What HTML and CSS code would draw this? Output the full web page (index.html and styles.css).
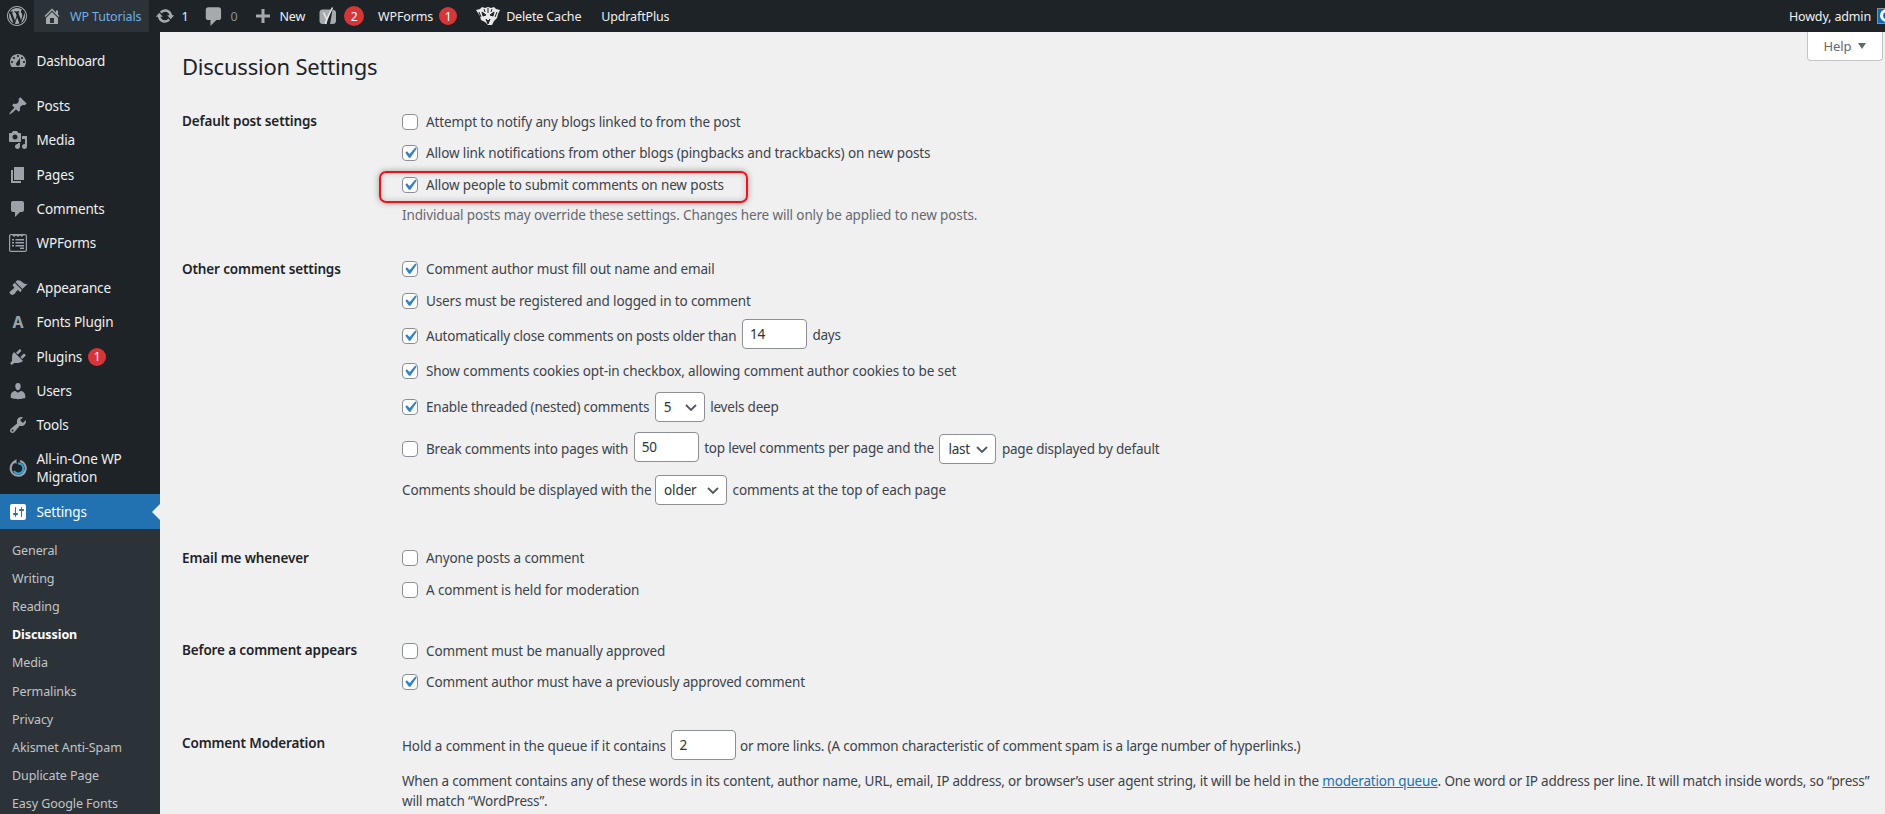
FILE: index.html
```html
<!DOCTYPE html>
<html lang="en">
<head>
<meta charset="utf-8">
<title>Discussion Settings</title>
<link rel="stylesheet" href="styles.css">
</head>
<body>
<header class="bar">
  <div class="bar-left">
    <span class="bar-item logo"><svg class="ic20" viewBox="0 0 20 20"><path d="M20 10c0-5.52-4.48-10-10-10S0 4.48 0 10s4.48 10 10 10 10-4.48 10-10zM10 1.01c4.96 0 8.99 4.03 8.99 8.99s-4.03 8.99-8.99 8.99S1.01 14.96 1.01 10 5.04 1.01 10 1.01zM8.01 14.82L4.96 6.61c.49-.03 1.05-.08 1.05-.08.43-.05.38-1.01-.06-.99 0 0-1.29.1-2.13.1-.15 0-.33 0-.52-.01 1.44-2.17 3.9-3.6 6.7-3.6 2.09 0 3.99.79 5.41 2.09-.6-.08-1.45.35-1.45 1.42 0 .66.38 1.22.79 1.88.31.54.5 1.22.5 2.21 0 1.34-1.27 4.48-1.27 4.48l-2.71-7.5c.48-.03.75-.16.75-.16.43-.04.38-1.1-.05-1.08 0 0-1.3.11-2.14.11-.78 0-2.11-.11-2.11-.11-.43-.02-.48 1.06-.05 1.08l.84.08 1.12 3.04zm6.02 2.15L16.64 10s.67-1.69.39-3.81c.63 1.14.94 2.42.94 3.81 0 2.96-1.56 5.58-3.94 6.97zM2.68 6.77L6.5 17.25c-2.67-1.3-4.47-4.07-4.47-7.25 0-1.16.2-2.23.65-3.23zm7.45 4.53l2.29 6.25c-.76.27-1.58.42-2.42.42-.71 0-1.4-.11-2.05-.3z"/></svg></span>
    <span class="bar-item site"><svg class="ic20" viewBox="0 0 20 20"><path d="M16 8.5l1.53 1.53-1.06 1.06L10 4.62l-6.47 6.47-1.06-1.06L10 2.5l4 4v-2h2v4zm-6-2.46l6 5.99V18H4v-5.97zM12 17v-5H8v5h4z"/></svg><span class="site-name">WP Tutorials</span></span>
    <span class="bar-item updates"><svg class="ic20" viewBox="0 0 20 20"><path d="M10.2 3.28c3.53 0 6.43 2.61 6.92 6h2.08l-3.5 4-3.5-4h2.32c-.45-1.97-2.21-3.45-4.32-3.45-1.45 0-2.73.71-3.54 1.78L4.95 5.66C6.23 4.2 8.11 3.28 10.2 3.28zm-.4 13.44c-3.52 0-6.43-2.61-6.92-6H.8l3.5-4c1.17 1.33 2.33 2.67 3.5 4H5.48c.45 1.97 2.21 3.45 4.32 3.45 1.45 0 2.73-.71 3.54-1.78l1.71 1.95c-1.28 1.46-3.15 2.38-5.25 2.38z"/></svg><span>1</span></span>
    <span class="bar-item"><svg class="ic20" viewBox="1.500 1 17 17"><path d="M5 2h9c1.100 0 2 .9 2 2v7c0 1.100-.9 2-2 2h-2l-5 5v-5H5c-1.100 0-2-.9-2-2V4c0-1.100.9-2 2-2z"/></svg><span class="muted">0</span></span>
    <span class="bar-item new"><svg class="ic20" viewBox="0 0 20 20"><path d="M8.500 3h3v5.500H17v3h-5.500V17h-3v-5.500H3v-3h5.500z"/></svg><span>New</span></span>
    <span class="bar-item yoast"><svg class="ic20" viewBox="0 0 20 20"><path d="M4.500 3.500H13L8.500 18H4.500C3 18 1.500 17 1.500 15V6.500C1.500 4.800 2.800 3.500 4.500 3.500zM14.500 3.600c1.800.3 3.500 1.300 3.500 3V15c0 1.800-1.400 3-3.200 3h-2.700z"/><path d="M5.500 6.500l3.200 6.800L7.500 18M14.500 1.500l-5.800 11.800" fill="none" stroke="#e8e8e8" stroke-width="1.500"/></svg><span class="badge">2</span></span>
    <span class="bar-item">WPForms<span class="badge small">1</span></span>
    <span class="bar-item wide"><svg class="tiger" viewBox="0 0 26 20"><path d="M1 4l4-1 2-2 3 1 3-1 3 1 3-1 2 2 4 1-2 4-1 4-3 3-2 4h-4l-3-3-4-2-1-4z" fill="#e8e8e8"/><path d="M7 6l4 3-3 1zM19 6l-4 3 3 1zM11 13l2 2 2-2-2 5zM4 6l2 5M22 6l-2 5M13 2v5M9 3l1 3M17 3l-1 3" fill="#1d2327" stroke="#1d2327"/></svg><span>Delete Cache</span></span>
    <span class="bar-item wide">UpdraftPlus</span>
  </div>
  <div class="bar-right"><span>Howdy, admin</span><span class="avatar"><span class="avatar-mark"></span></span></div>
</header>

<div class="layout">
  <nav class="side">
    <ul class="menu first">
      <li class="mi"><svg class="mic" viewBox="0 0 20 20"><path fill-rule="evenodd" d="M3.760 16h12.480c1.100-1.370 1.760-3.110 1.760-5 0-4.420-3.580-8-8-8s-8 3.580-8 8c0 1.890.660 3.630 1.760 5zM10 4c.55 0 1 .45 1 1s-.45 1-1 1-1-.45-1-1 .45-1 1-1zM6 6c.55 0 1 .45 1 1s-.45 1-1 1-1-.45-1-1 .45-1 1-1zm8 0c.55 0 1 .45 1 1s-.45 1-1 1-1-.45-1-1 .45-1 1-1zm-5.370 5.550L12 7v6c0 1.100-.9 2-2 2s-2-.9-2-2c0-.57.24-1.080.63-1.450zM4 10c.55 0 1 .45 1 1s-.45 1-1 1-1-.45-1-1 .45-1 1-1zm12 0c.55 0 1 .45 1 1s-.45 1-1 1-1-.45-1-1 .45-1 1-1z"/></svg>Dashboard</li>
    </ul>
    <ul class="menu">
      <li class="mi"><svg class="mic" viewBox="0 0 20 20"><path d="M10.440 3.020l1.820-1.820 6.360 6.350-1.830 1.820c-1.050-.68-2.480-.57-3.410.36l-.75.75c-.92.93-1.040 2.350-.35 3.410l-1.830 1.820-2.410-2.410-2.800 2.790c-.42.42-3.380 2.710-3.800 2.290s1.860-3.390 2.280-3.810l2.790-2.790L4.100 9.360l1.830-1.820c1.050.69 2.480.57 3.400-.36l.75-.75c.93-.92 1.050-2.350.36-3.410z"/></svg>Posts</li>
      <li class="mi"><svg class="mic" viewBox="0 0 20 20"><path fill-rule="evenodd" d="M13 11V4c0-.55-.45-1-1-1h-1.670L9 1H5L3.670 3H2c-.55 0-1 .45-1 1v7c0 .55.45 1 1 1h10c.55 0 1-.45 1-1zM7 4.500c1.380 0 2.500 1.120 2.500 2.500S8.380 9.500 7 9.500 4.500 8.380 4.500 7 5.620 4.500 7 4.500zM14 6h5v10.500c0 1.380-1.120 2.500-2.500 2.500S14 17.880 14 16.500s1.120-2.500 2.500-2.500c.17 0 .34.02.5.05V9h-3V6zm-4 8.050V13h2v3.500c0 1.380-1.120 2.500-2.500 2.500S7 17.880 7 16.500 8.120 14 9.500 14c.17 0 .34.02.5.05z"/></svg>Media</li>
      <li class="mi"><svg class="mic" viewBox="0 0 20 20"><path d="M6 15V2h10v13H6zm-1 1h8v2H3V5h2v11z"/></svg>Pages</li>
      <li class="mi"><svg class="mic" viewBox="0 0 20 20"><path d="M5 2h9c1.100 0 2 .9 2 2v7c0 1.100-.9 2-2 2h-2l-5 5v-5H5c-1.100 0-2-.9-2-2V4c0-1.100.9-2 2-2z"/></svg>Comments</li>
      <li class="mi"><svg class="mic" viewBox="0 0 20 20"><path fill-rule="evenodd" d="M3 1h14c1.100 0 2 .9 2 2v14c0 1.100-.9 2-2 2H3c-1.100 0-2-.9-2-2V3c0-1.100.9-2 2-2zm0 1.200c-.5 0-.8.3-.8.8v14c0 .5.3.8.8.8h14c.5 0 .8-.3.8-.8V3c0-.5-.3-.8-.8-.8h-1.500L14 4l-2-1.500-2 1.500-2-1.500L6 4 4.500 2.200zM4 6h2v1.500H4zm3.500 0H16v1.500H7.500zM4 9h2v1.500H4zm3.500 0H16v1.500H7.500zM4 12h2v1.500H4zm3.500 0H16v1.500H7.500zM12 14.500h4V16h-4z"/></svg>WPForms</li>
    </ul>
    <ul class="menu">
      <li class="mi"><svg class="mic" viewBox="0 0 20 20"><path d="M14.480 11.060L7.410 3.990l1.500-1.500c.5-.56 2.300-.47 3.510.32 1.210.8 1.430 1.280 2.910 2.100 1.180.64 2.450 1.260 4.450.85zm-.71.71L6.700 4.700 4.930 6.470c-.39.39-.39 1.020 0 1.410l1.060 1.060c.39.39.39 1.030 0 1.420-.6.6-1.430 1.110-2.210 1.690-.35.26-.7.53-1.010.84C1.430 13.230.99 14.500 2.500 15.990c1.510 1.500 2.770 1.080 4.110-.22.33-.33.6-.68.86-1.020.58-.78 1.090-1.610 1.690-2.210.39-.39 1.020-.39 1.410 0l1.060 1.060c.39.39 1.020.39 1.410 0z"/></svg>Appearance</li>
      <li class="mi"><span class="mic glyph">A</span>Fonts Plugin</li>
      <li class="mi"><svg class="mic" viewBox="0 0 20 20"><path d="M13.110 4.360L9.870 7.600 8 5.730l3.240-3.240c.35-.34 1.050-.2 1.560.32.52.51.66 1.210.31 1.550zm-8 1.770l.91-1.120 9.010 9.010-1.190.84c-.71.71-2.630 1.160-3.820 1.160H6.140L4.900 17.260c-.59.59-1.540.59-2.120 0-.59-.58-.59-1.530 0-2.120l1.240-1.240v-3.880c0-1.130.4-3.190 1.090-3.890zm7.260 3.970l3.240-3.240c.34-.35 1.040-.21 1.550.31.52.51.66 1.210.31 1.550l-3.240 3.250z"/></svg>Plugins<span class="badge side-badge">1</span></li>
      <li class="mi"><svg class="mic" viewBox="0 0 20 20"><path d="M10 9.250c-2.270 0-2.730-3.440-2.730-3.440C7 4.020 7.820 2 9.970 2c2.160 0 2.980 2.020 2.710 3.810 0 0-.41 3.440-2.680 3.440zm0 2.570L12.720 10c2.390 0 4.520 2.330 4.520 4.530v2.490s-3.650 1.130-7.240 1.130c-3.650 0-7.240-1.130-7.240-1.130v-2.490c0-2.250 1.940-4.480 4.470-4.480z"/></svg>Users</li>
      <li class="mi"><svg class="mic" viewBox="0 0 20 20"><path fill-rule="evenodd" d="M16.680 9.770c-1.340 1.340-3.300 1.670-4.950.99l-5.410 6.520c-.99.99-2.590.99-3.580 0s-.99-2.590 0-3.570l6.520-5.420c-.68-1.650-.35-3.610.99-4.950 1.280-1.280 3.120-1.620 4.720-1.060l-2.890 2.890 2.820 2.820 2.860-2.870c.53 1.580.18 3.390-1.080 4.650zM3.810 16.210c.4.39 1.040.39 1.430 0 .4-.4.4-1.040 0-1.430-.39-.4-1.030-.4-1.430 0-.39.39-.39 1.030 0 1.430z"/></svg>Tools</li>
      <li class="mi tall"><svg class="mic" viewBox="0 0 20 20"><path d="M7 3.500A7.500 7.500 0 1 0 12 3" fill="none" stroke="#9ca2a7" stroke-width="2"/><path d="M8.500 1v5L5 3.500z" fill="#9ca2a7"/><path d="M10 5.500A5 5 0 1 1 6 13" fill="none" stroke="#2ea2dd" stroke-width="2"/></svg><span>All-in-One WP Migration</span></li>
      <li class="mi current"><svg class="mic" viewBox="0 0 20 20"><path fill-rule="evenodd" d="M18 16V4c0-1.100-.9-2-2-2H4c-1.100 0-2 .9-2 2v12c0 1.100.9 2 2 2h12c1.100 0 2-.9 2-2zM8 11h1c.55 0 1 .45 1 1s-.45 1-1 1H8v1.500c0 .28-.22.5-.5.5s-.5-.22-.5-.5V13H6c-.55 0-1-.45-1-1s.45-1 1-1h1V5.500c0-.28.22-.5.5-.5s.5.22.5.5V11zm5-2h-1c-.55 0-1-.45-1-1s.45-1 1-1h1V5.500c0-.28.22-.5.5-.5s.5.22.5.5V7h1c.55 0 1 .45 1 1s-.45 1-1 1h-1v5.500c0 .28-.22.5-.5.5s-.5-.22-.5-.5V9z"/></svg>Settings</li>
    </ul>
    <ul class="sub">
      <li>General</li><li>Writing</li><li>Reading</li><li class="on">Discussion</li><li>Media</li><li>Permalinks</li><li>Privacy</li><li>Akismet Anti-Spam</li><li>Duplicate Page</li><li>Easy Google Fonts</li>
    </ul>
  </nav>

  <main class="main">
    <div class="help">Help <span class="tri"></span></div>
    <h1 class="title">Discussion Settings</h1>

    <section class="group g-default">
      <h2 class="th">Default post settings</h2>
      <div class="td">
        <label class="row"><input type="checkbox">Attempt to notify any blogs linked to from the post</label>
        <label class="row"><input type="checkbox" checked>Allow link notifications from other blogs (pingbacks and trackbacks) on new posts</label>
        <label class="row marked"><input type="checkbox" checked>Allow people to submit comments on new posts<span class="mark"></span></label>
        <p class="row desc">Individual posts may override these settings. Changes here will only be applied to new posts.</p>
      </div>
    </section>

    <section class="group g-other">
      <h2 class="th">Other comment settings</h2>
      <div class="td">
        <label class="row"><input type="checkbox" checked>Comment author must fill out name and email</label>
        <label class="row"><input type="checkbox" checked>Users must be registered and logged in to comment</label>
        <label class="row r-close tight"><input type="checkbox" checked><span>Automatically close comments on posts older than</span><input class="num lifted" type="text" value="14"><span class="lift">days</span></label>
        <label class="row r-cookie"><input type="checkbox" checked>Show comments cookies opt-in checkbox, allowing comment author cookies to be set</label>
        <label class="row r-thread tight"><input type="checkbox" checked><span>Enable threaded (nested) comments</span><select class="sel s5"><option>5</option></select><span class="lift-s">levels deep</span></label>
        <label class="row r-break tight"><input type="checkbox"><span>Break comments into pages with</span><input class="num lifted" type="text" value="50"><span class="lift">top level comments per page and the</span><select class="sel s-last"><option>last</option></select><span class="lift-s">page displayed by default</span></label>
        <label class="row r-order"><span>Comments should be displayed with the</span><select class="sel s-older"><option>older</option></select><span>comments at the top of each page</span></label>
      </div>
    </section>

    <section class="group g-email">
      <h2 class="th">Email me whenever</h2>
      <div class="td">
        <label class="row"><input type="checkbox">Anyone posts a comment</label>
        <label class="row"><input type="checkbox">A comment is held for moderation</label>
      </div>
    </section>

    <section class="group g-before">
      <h2 class="th">Before a comment appears</h2>
      <div class="td">
        <label class="row"><input type="checkbox">Comment must be manually approved</label>
        <label class="row"><input type="checkbox" checked>Comment author must have a previously approved comment</label>
      </div>
    </section>

    <section class="group g-mod">
      <h2 class="th">Comment Moderation</h2>
      <div class="td">
        <label class="row r-hold"><span>Hold a comment in the queue if it contains</span><input class="num lifted-s" type="text" value="2"><span class="tight">or more links. (A common characteristic of comment spam is a large number of hyperlinks.)</span></label>
        <p class="para">When a comment contains any of these words in its content, author name, URL, email, IP address, or browser’s user agent string, it will be held in the <a href="#">moderation queue</a>. One word or IP address per line. It will match inside words, so “press” will match “WordPress”.</p>
      </div>
    </section>
  </main>
</div>
</body>
</html>
```

FILE: styles.css
```css
* { box-sizing: border-box; }
html, body { height: 100%; margin: 0; overflow: hidden; }
body { background: #f0f0f1; color: #3c434a; font-family: "Noto Sans", "Open Sans", sans-serif; font-size: 13px; }
ul { list-style: none; margin: 0; padding: 0; }

.bar { height: 32px; background: #1d2327; color: #f0f0f1; display: flex; justify-content: space-between; font-size: 12.5px; letter-spacing: -.15px; }
.bar-left { display: flex; }
.bar-right { display: flex; align-items: center; gap: 6px; white-space: nowrap; margin-right: -14px; }
.bar-item { display: flex; align-items: center; gap: 6px; padding: 0 8px; height: 32px; white-space: nowrap; }
.bar-item svg { fill: #a7aaad; flex: none; }
.ic20 { width: 20px; height: 20px; }
.logo { padding: 0 7px; }
.site { background: #2c3338; color: #72aee6; gap: 8px; }
.updates { padding-left: 6px; }
.muted { color: #8c8f94; }
.new { padding-right: 6px; }
.yoast { padding-left: 7px; padding-right: 6px; }
.wide { padding: 0 10px; gap: 5px; }
.tiger { width: 26px; height: 20px; }
.badge { display: inline-flex; align-items: center; justify-content: center; width: 20px; height: 20px; border-radius: 50%; background: #d63638; color: #fff; font-size: 12px; }
.small { width: 18px; height: 18px; }
.avatar { width: 22px; height: 16px; background: #0f6cb0; border: 1px solid #8c8f94; display: block; overflow: hidden; }
.avatar-mark { display: block; width: 13px; height: 13px; border: 3px solid #fff; border-radius: 50%; margin: 0 0 0 2px; }

.layout { display: flex; height: calc(100% - 32px); }
.side { width: 160px; flex: none; background: #1d2327; color: #f0f0f1; font-size: 13.5px; letter-spacing: -.13px; overflow: hidden; }
.menu { margin-bottom: 11px; }
.menu.first { margin-top: 12px; }
.mi { display: flex; align-items: center; gap: 8.5px; height: 34.2px; padding-left: 8px; position: relative; }
.mic { width: 20px; height: 20px; flex: none; fill: #9ca2a7; }
.glyph { display: flex; align-items: center; justify-content: center; font-weight: 700; font-size: 16px; color: #9ca2a7; }
.side-badge { margin-left: -2.500px; font-size: 12px; width: 18px; height: 18px; }
.tall { height: 52px; line-height: 18px; }
.current { background: #2271b1; color: #fff; height: 35px; margin-bottom: -11px; }
.current .mic { fill: #fff; }
.current::after { content: ""; position: absolute; right: 0; top: 9.500px; border: 8px solid transparent; border-right-color: #f0f0f1; border-left-width: 0; }
.sub { background: #2c3338; padding: 7.600px 0; color: #c3c4c7; font-size: 12.5px; letter-spacing: -.08px; }
.sub li { height: 28.2px; line-height: 28.2px; padding-left: 12px; }
.sub .on { color: #fff; font-weight: 700; }

.main { flex: 1; min-width: 0; padding: 0 14px 0 22px; position: relative; font-size: 13.5px; letter-spacing: -.13px; }
.help { position: absolute; right: 2px; top: 0; width: 76px; height: 29px; background: #fff; border: 1px solid #c3c4c7; border-top: 0; border-radius: 0 0 4px 4px; color: #646970; display: flex; align-items: center; justify-content: center; gap: 7px; font-size: 13px; }
.tri { border: 4.500px solid transparent; border-top: 6px solid #646970; border-bottom: 0; }
.title { margin: 0; padding-top: 19px; font-size: 22px; font-weight: 400; line-height: 30px; letter-spacing: -.22px; color: #1d2327; }

.group { display: flex; }
.th { width: 220px; flex: none; margin: 0; font-size: inherit; font-weight: 600; color: #1d2327; line-height: 31.500px; }
.td { flex: 1; min-width: 0; }
.row { display: flex; align-items: center; height: 31.500px; margin: 0; white-space: pre; position: relative; }
.tight { letter-spacing: -.2px; }
.row > input[type=checkbox] { appearance: none; width: 16px; height: 16px; margin: 0 8px 0 0; flex: none; border: 1px solid #8c8f94; border-radius: 4px; background: #fff center/22px no-repeat; }
.row > input[type=checkbox]:checked { background-image: url("data:image/svg+xml;utf8,<svg xmlns='http://www.w3.org/2000/svg' viewBox='0 0 20 20'><path d='M14.830 4.890l1.340.94-5.810 8.380H9.020L5.780 9.670l1.340-1.250 2.570 2.400z' fill='%233582c4'/></svg>"); }
.g-default { margin-top: 25px; }
.g-other { margin-top: 24px; }
.g-email { margin-top: 32.500px; }
.g-before { margin-top: 29.500px; }
.g-mod { margin-top: 30px; }
.desc { height: 29px; color: #646970; }
.mark { position: absolute; left: -23px; top: 2px; width: 369px; height: 32px; border: 2px solid #ef1019; border-radius: 7px; box-shadow: 0 0 6px rgba(0,0,0,.35), inset 0 0 6px rgba(0,0,0,.2); }
.r-close { height: 39.500px; }
.r-cookie { height: 30.500px; }
.r-thread { height: 41.500px; }
.r-break { height: 42.500px; }
.r-order { height: 39.500px; }
.r-order .sel { margin-left: 3.500px; }
.r-hold { height: 35px; }
.r-hold .num { margin-right: 3.500px; }
.lift { position: relative; top: -1.500px; }
.lift-s { position: relative; top: -.5px; }
.num, .sel { height: 30px; border: 1px solid #8c8f94; border-radius: 4px; background: #fff; color: #2c3338; font: inherit; letter-spacing: inherit; margin: 0 5.500px; flex: none; }
.num { width: 65px; padding: 0 7px; }
.lifted { position: relative; top: -2px; }
.lifted-s { position: relative; top: -1px; }
.sel { appearance: none; padding: 0 24px 0 8px; background: #fff url("data:image/svg+xml;utf8,<svg xmlns='http://www.w3.org/2000/svg' width='16' height='16' viewBox='0 0 16 16'><path d='M3 6l5 5 5-5' fill='none' stroke='%2350575e' stroke-width='1.800'/></svg>") right 5px center/16px no-repeat; }
.s5 { width: 50px; }
.s-last { width: 57px; }
.s-older { width: 72px; }
.para { margin: 9px 0 0; line-height: 19.600px; letter-spacing: -.18px; }
.para a { color: #2271b1; }
```
